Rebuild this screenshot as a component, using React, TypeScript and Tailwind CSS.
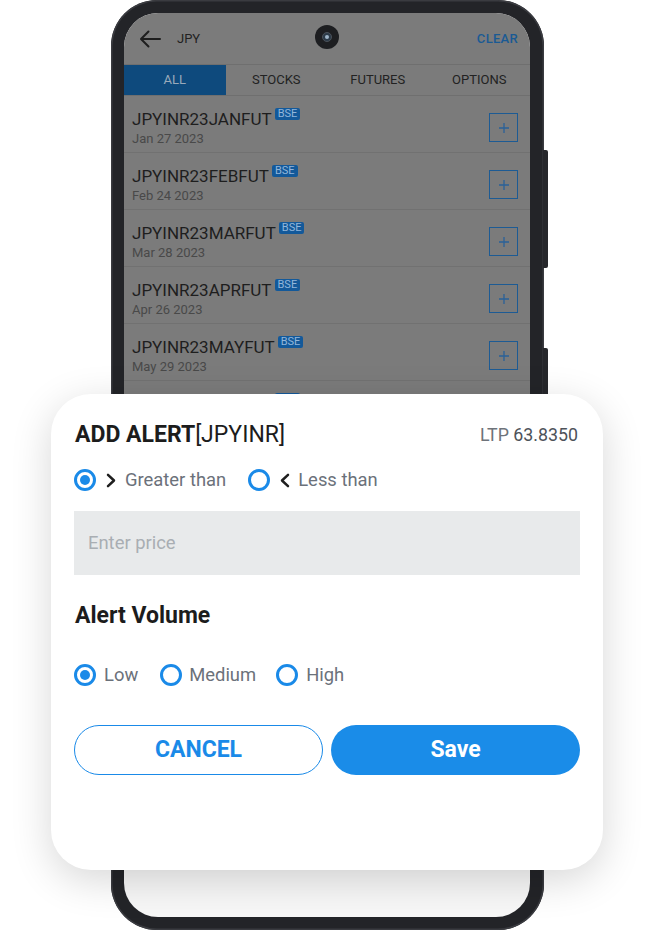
import React from "react";

const rows = [
  { t: "JPYINR23JANFUT", d: "Jan 27 2023" },
  { t: "JPYINR23FEBFUT", d: "Feb 24 2023" },
  { t: "JPYINR23MARFUT", d: "Mar 28 2023" },
  { t: "JPYINR23APRFUT", d: "Apr 26 2023" },
  { t: "JPYINR23MAYFUT", d: "May 29 2023" },
  { t: "JPYINR23JUNFUT", d: "Jun 28 2023" },
  { t: "JPYINR23JULFUT", d: "Jul 27 2023" },
  { t: "JPYINR23AUGFUT", d: "Aug 29 2023" },
];

function Radio({ on }: { on: boolean }) {
  return (
    <span className="flex h-[22px] w-[22px] shrink-0 items-center justify-center rounded-full border-[3px] border-[#1a8ae8]">
      {on && <span className="h-[10px] w-[10px] rounded-full bg-[#1a8ae8]" />}
    </span>
  );
}

function Chevron({ dir }: { dir: "right" | "left" }) {
  return (
    <svg width="10" height="15" viewBox="0 0 10 15" fill="none" className="block">
      <path
        d={dir === "right" ? "M2 1.8 L8 7.5 L2 13.2" : "M8 1.8 L2 7.5 L8 13.2"}
        stroke="#1f1f1f"
        strokeWidth="2.5"
        strokeLinecap="round"
        strokeLinejoin="round"
      />
    </svg>
  );
}

export default function App() {
  return (
    <div className="relative h-[930px] w-[654px] overflow-hidden bg-white [font-family:Roboto,sans-serif]">
      {/* Phone */}
      <div className="relative ml-[111px] h-[930px] w-[433px] rounded-[46px] bg-[#232428] p-[13px] pr-[14px] shadow-[inset_0_0_0_1.5px_#3a3b40]">
        <div className="relative flex h-[904px] flex-col overflow-hidden rounded-[34px] bg-[#f7f7f7]">
          <div className="flex h-[820px] flex-col bg-[#7b7b7b]">
            {/* header */}
            <div className="relative flex h-[51px] shrink-0 items-center pl-[15px] pr-[12px]">
              <svg width="22" height="18" viewBox="0 0 22 18" fill="none">
                <path d="M21 9 H2.5 M9.5 1.5 L2 9 L9.5 16.5" stroke="#1e1e1e" strokeWidth="2" strokeLinecap="round" strokeLinejoin="round" />
              </svg>
              <span className="ml-[16px] text-[13px] text-[#222]">JPY</span>
              <span className="ml-auto text-[13px] font-medium tracking-[0.3px] text-[#1a5a94]">CLEAR</span>
              <div className="absolute left-[191px] top-[12px] flex h-[24px] w-[24px] items-center justify-center rounded-full bg-[#1d1e21]">
                <div className="flex h-[10px] w-[10px] items-center justify-center rounded-full border border-[#4a5058] bg-[#2c3a48]">
                  <div className="h-[4px] w-[4px] rounded-full bg-[#9fb4c8]" />
                </div>
              </div>
            </div>
            {/* tabs */}
            <div className="grid h-[32px] shrink-0 grid-cols-4 border-y border-[#6f6f6f] text-[13px]">
              <div className="flex items-center justify-center bg-[#0e4a7d] text-[#9aaaba]">ALL</div>
              <div className="flex items-center justify-center text-[#222]">STOCKS</div>
              <div className="flex items-center justify-center text-[#222]">FUTURES</div>
              <div className="flex items-center justify-center text-[#222]">OPTIONS</div>
            </div>
            {/* rows */}
            {rows.map((r) => (
              <div key={r.t} className="flex h-[57px] shrink-0 items-start border-b border-[#717171] pl-[8px] pr-[12px]">
                <div className="flex flex-col pt-[13px]">
                  <div className="flex items-start">
                    <span className="text-[17px] leading-[20px] text-[#1e1e1e]">{r.t}</span>
                    <span className="ml-[3px] mt-[-1px] rounded-[2px] bg-[#13599a] px-[3px] text-[11px] leading-[12px] text-[#92b6da]">BSE</span>
                  </div>
                  <span className="mt-[2px] text-[13px] leading-[16px] text-[#494949]">{r.d}</span>
                </div>
                <div className="ml-auto mt-[17px] flex h-[29px] w-[29px] items-center justify-center border-[1.5px] border-[#1d5b94]">
                  <svg width="12" height="12" viewBox="0 0 12 12">
                    <path d="M6 1 V11 M1 6 H11" stroke="#2a6199" strokeWidth="1.3" />
                  </svg>
                </div>
              </div>
            ))}
          </div>
        </div>
      </div>
      {/* side buttons */}
      <div className="absolute left-[543px] top-[150px] h-[118px] w-[5px] rounded-r-[2px] bg-[#26272b]" />
      <div className="absolute left-[543px] top-[348px] h-[80px] w-[5px] rounded-r-[2px] bg-[#26272b]" />

      {/* Modal */}
      <div className="absolute left-[51px] top-[394px] flex h-[476px] w-[552px] flex-col rounded-[40px] bg-white px-[23px] pt-[28px] shadow-[0_10px_40px_rgba(0,0,0,0.16)]">
        <div className="flex items-center justify-between pl-[1px] pr-[2px]">
          <div className="text-[23px] leading-[26px] text-[#1c1c1c]">
            <span className="font-bold">ADD ALERT</span>
            <span>[JPYINR]</span>
          </div>
          <div className="text-[17.8px] leading-[26px] text-[#6e737a]">
            LTP <span className="text-[#4d5259]">63.8350</span>
          </div>
        </div>
        <div className="mt-[20px] flex items-center leading-[24px]">
          <Radio on />
          <span className="ml-[10px]"><Chevron dir="right" /></span>
          <span className="ml-[9px] text-[18.4px] text-[#6b717a]">Greater than</span>
          <span className="ml-[22px]"><Radio on={false} /></span>
          <span className="ml-[10px]"><Chevron dir="left" /></span>
          <span className="ml-[8px] text-[18.4px] text-[#6b717a]">Less than</span>
        </div>
        <div className="mt-[19px] flex h-[64px] items-center bg-[#e8eaeb] px-[14px] text-[18.4px] text-[#a9aeb3]">
          Enter price
        </div>
        <div className="mt-[28px] pl-[1px] text-[23px] font-bold leading-[26px] text-[#1c1c1c]">Alert Volume</div>
        <div className="mt-[34px] flex items-center leading-[24px]">
          <Radio on />
          <span className="ml-[8px] text-[18.4px] text-[#6b717a]">Low</span>
          <span className="ml-[22px]"><Radio on={false} /></span>
          <span className="ml-[7px] text-[18.4px] text-[#6b717a]">Medium</span>
          <span className="ml-[20px]"><Radio on={false} /></span>
          <span className="ml-[8px] text-[18.4px] text-[#6b717a]">High</span>
        </div>
        <div className="mt-[38px] grid grid-cols-2 gap-[8px]">
          <div className="flex h-[50px] items-center justify-center rounded-full border-[1.5px] border-[#1a8ae8] text-[23px] font-bold text-[#1a8ae8]">
            CANCEL
          </div>
          <div className="flex h-[50px] items-center justify-center rounded-full bg-[#1a8ce8] text-[23px] font-bold text-white">
            Save
          </div>
        </div>
      </div>
    </div>
  );
}
